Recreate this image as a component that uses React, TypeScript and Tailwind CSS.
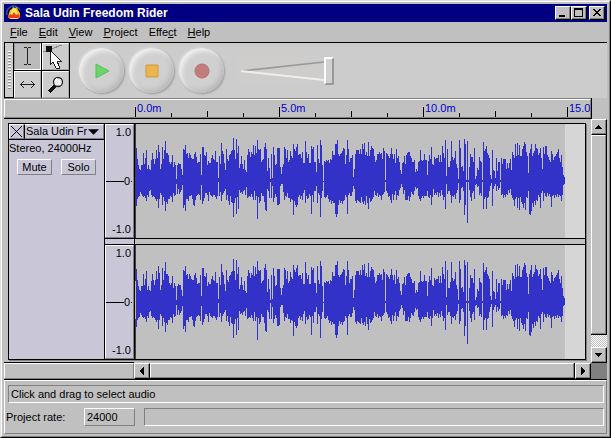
import React from 'react';
import clsx from 'clsx';

const MIDLINE = 260;

// upper and lower envelope, one value per column, around MIDLINE
const tops = [
  215, 160, 193, 211, 223, 226, 211, 211, 175, 208, 190, 166, 223, 211, 223, 226, 196, 175, 193, 208,
  193, 166, 190, 151, 172, 223, 208, 157, 193, 166, 139, 175, 175, 181, 202, 208, 202, 181, 217, 203,
  211, 253, 211, 205, 208, 208, 223, 243, 163, 166, 153, 178, 175, 190, 175, 181, 190, 193, 193, 178,
  172, 187, 205, 203, 203, 178, 243, 157, 157, 183, 185, 173, 213, 200, 205, 205, 190, 183, 195, 198,
  171, 203, 203, 252, 186, 208, 147, 171, 180, 205, 228, 165, 195, 200, 183, 180, 170, 167, 132, 167,
  193, 135, 177, 156, 222, 208, 186, 210, 225, 198, 228, 232, 183, 165, 174, 188, 174, 180, 153, 183,
  156, 177, 138, 165, 168, 165, 203, 198, 195, 159, 147, 165, 231, 192, 222, 255, 178, 250, 159, 183,
  213, 208, 162, 162, 162, 219, 240, 219, 208, 159, 165, 190, 168, 204, 198, 171, 186, 190, 150, 165,
  171, 158, 150, 183, 178, 178, 190, 174, 207, 207, 141, 174, 190, 180, 207, 205, 156, 165, 159, 204,
  204, 234, 153, 195, 205, 138, 153, 213, 260, 201, 203, 198, 201, 198, 205, 193, 198, 171, 183, 183,
  150, 148, 138, 178, 186, 180, 177, 171, 162, 165, 210, 183, 138, 165, 204, 192, 190, 183, 249, 225,
  180, 168, 168, 168, 180, 165, 180, 150, 165, 147, 183, 174, 186, 144, 186, 168, 156, 162, 165, 186,
  204, 198, 180, 180, 174, 180, 177, 195, 162, 171, 257, 177, 178, 186, 190, 180, 162, 180, 195, 178,
  205, 165, 192, 186, 202, 228, 240, 207, 204, 186, 210, 183, 177, 174, 174, 186, 192, 204, 204, 198,
  234, 225, 230, 204, 201, 168, 198, 201, 198, 180, 198, 198, 243, 201, 183, 195, 159, 210, 213, 189,
  193, 192, 192, 183, 204, 183, 204, 156, 177, 192, 138, 245, 165, 219, 219, 201, 141, 189, 198, 192,
  171, 210, 222, 255, 138, 162, 218, 216, 231, 135, 150, 258, 141, 258, 219, 180, 189, 189, 204, 162,
  255, 246, 222, 228, 189, 200, 202, 258, 144, 171, 165, 156, 177, 183, 192, 243, 255, 168, 228, 231,
  252, 192, 231, 204, 204, 258, 192, 210, 195, 195, 195, 225, 207, 222, 207, 195, 228, 174, 183, 192,
  150, 186, 147, 183, 153, 186, 186, 165, 156, 144, 150, 174, 186, 237, 177, 165, 150, 186, 177, 171,
  150, 162, 165, 183, 177, 162, 192, 225, 159, 180, 156, 156, 183, 189, 198, 204, 171, 180, 198, 189,
  186, 180, 174, 165, 192, 204, 183, 219, 243, 249,
];

const bottoms = [
  290, 334, 313, 308, 305, 293, 298, 305, 307, 305, 311, 319, 301, 307, 289, 286, 301, 307, 305, 308,
  313, 319, 313, 340, 313, 295, 301, 331, 307, 319, 349, 323, 328, 313, 313, 305, 307, 323, 295, 305,
  301, 268, 298, 283, 298, 293, 286, 271, 340, 331, 349, 313, 313, 319, 305, 305, 301, 313, 331, 334,
  318, 305, 301, 299, 301, 318, 273, 330, 321, 312, 297, 295, 303, 320, 292, 303, 306, 309, 303, 303,
  309, 315, 306, 264, 306, 294, 321, 303, 297, 291, 285, 318, 303, 321, 333, 306, 324, 327, 369, 327,
  310, 360, 309, 345, 288, 297, 294, 300, 291, 288, 303, 279, 312, 309, 306, 309, 300, 309, 318, 291,
  318, 306, 375, 309, 327, 321, 297, 306, 306, 324, 348, 350, 285, 291, 310, 262, 312, 276, 324, 310,
  300, 309, 333, 333, 330, 276, 268, 270, 294, 318, 306, 309, 297, 310, 312, 324, 315, 318, 363, 321,
  333, 339, 333, 309, 303, 315, 306, 318, 297, 288, 327, 306, 315, 312, 300, 306, 360, 303, 324, 291,
  291, 276, 327, 297, 303, 369, 312, 291, 264, 309, 312, 309, 303, 315, 324, 318, 330, 321, 327, 327,
  360, 369, 360, 333, 318, 327, 321, 330, 321, 318, 303, 309, 360, 303, 297, 306, 306, 294, 276, 285,
  321, 327, 318, 321, 324, 327, 309, 324, 330, 321, 333, 306, 327, 345, 312, 324, 321, 315, 309, 291,
  303, 306, 297, 309, 303, 306, 318, 303, 300, 294, 262, 291, 297, 309, 306, 318, 327, 300, 318, 303,
  291, 318, 303, 306, 288, 282, 270, 279, 300, 288, 318, 318, 318, 306, 321, 309, 294, 300, 303, 291,
  279, 285, 282, 306, 315, 321, 312, 306, 312, 306, 306, 306, 291, 309, 312, 303, 333, 309, 285, 303,
  297, 303, 294, 309, 297, 306, 288, 303, 318, 309, 345, 270, 300, 291, 291, 303, 327, 306, 309, 303,
  315, 297, 288, 265, 327, 318, 282, 279, 291, 362, 333, 262, 387, 262, 288, 309, 321, 297, 291, 315,
  273, 270, 279, 276, 303, 297, 306, 264, 345, 315, 309, 345, 312, 309, 291, 276, 265, 336, 285, 276,
  270, 291, 276, 288, 282, 262, 303, 300, 312, 303, 309, 300, 303, 288, 297, 285, 303, 312, 318, 336,
  315, 309, 342, 312, 348, 309, 324, 330, 342, 327, 348, 309, 312, 291, 360, 362, 351, 327, 339, 321,
  333, 318, 321, 303, 309, 342, 297, 291, 321, 297, 306, 309, 297, 306, 300, 309, 339, 306, 303, 312,
  303, 309, 300, 309, 303, 306, 321, 303, 273, 270,
];

const wavePath = tops
  .map((top, i) => `M${i} ${top}h1V${Math.max(bottoms[i], MIDLINE + 3)}h-1z`)
  .join('');

const menus = ['File', 'Edit', 'View', 'Project', 'Effect', 'Help'];
const accessKeys: Record<string, number> = { Effect: 4 };

const rulerTicks = ['0.0m', '', '', '', '5.0m', '', '', '', '10.0m', '', '', '', '15.0m'];

const raised = 'border border-t-white border-l-white border-r-[#808080] border-b-[#808080]';
const sunken = 'border border-t-[#808080] border-l-[#808080] border-r-white border-b-white';

function AppIcon() {
  return (
    <svg className="h-4 w-4 shrink-0" viewBox="0 0 16 16" aria-hidden="true">
      <circle cx="8" cy="8" r="7" fill="#00004c" />
      <path d="M1 10a7 7 0 0 1 13-5" fill="none" stroke="#2b55a8" strokeWidth="1.6" />
      <path d="M4 5l2-1 1-2 2 1 2-1 1 3 2 3v4l-2 2H4l-2-2 1-4z" fill="#ffae22" />
      <path d="M6 5l1-2 3 1 1 3 1 3H4l1-3z" fill="#ffee66" />
      <path d="M2 11l3-2 1 1 2-3 2 3 2-1 2 2-2 2H4z" fill="#f03a10" />
      <path d="M4 13h8l-1 1H5z" fill="#ffd0a0" />
    </svg>
  );
}

function CaptionButton({ label, children, className }: { label: string; children: React.ReactNode; className?: string }) {
  return (
    <button
      aria-label={label}
      className={clsx('h-[14px] w-4 border border-t-white border-l-white border-r-black border-b-black bg-[#c0c0c0] shadow-[inset_-1px_-1px_0_#808080]', className)}
    >
      <svg className="h-3 w-[14px]" viewBox="0 0 14 12" shapeRendering="crispEdges">
        {children}
      </svg>
    </button>
  );
}

function TitleBar() {
  return (
    <header className="flex h-[18px] items-center gap-[3px] bg-[#000080] px-[2px]">
      <AppIcon />
      <h1 className="flex-1 text-[12px] leading-[18px] font-bold text-white">Sala Udin Freedom Rider</h1>
      <div className="flex">
        <CaptionButton label="Minimize">
          <path d="M3 8h6v2H3z" />
        </CaptionButton>
        <CaptionButton label="Maximize">
          <path fillRule="evenodd" d="M2 1h9v9H2zM3 3v6h7V3z" />
        </CaptionButton>
        <CaptionButton label="Close" className="ml-[2px]">
          <path d="M3 2h2v1h1v1h2V3h1V2h2v1h-1v1H9v1H8v1h1v1h1v1h1v1H9V8H8V7H6v1H5v1H3V8h1V7h1V6h1V5H5V4H4V3H3z" />
        </CaptionButton>
      </div>
    </header>
  );
}

function MenuBar() {
  return (
    <nav className="flex h-[21px] items-center gap-[11px] border-b border-black pl-[6px]">
      {menus.map((menu) => {
        const key = accessKeys[menu] ?? 0;
        return (
          <button key={menu} className="leading-[13px]">
            {menu.slice(0, key)}
            <span className="underline underline-offset-1">{menu[key]}</span>
            {menu.slice(key + 1)}
          </button>
        );
      })}
    </nav>
  );
}

function ToolButton({ label, active, children }: { label: string; active?: boolean; children: React.ReactNode }) {
  return (
    <button
      aria-label={label}
      aria-pressed={!!active}
      className={clsx(
        'h-[27px] w-[27px]',
        active
          ? 'border border-t-[#999] border-l-[#999] border-r-white border-b-white bg-[#bbb]'
          : 'border border-t-white border-l-white border-r-[#aaa] border-b-[#aaa] bg-[#ccc]'
      )}
    >
      <svg className="h-[25px] w-[25px]" viewBox="0 0 25 25" shapeRendering="crispEdges">
        {children}
      </svg>
    </button>
  );
}

function ToolPalette() {
  return (
    <div className="grid grid-cols-2 gap-px border-x border-black bg-black">
      <ToolButton label="Selection tool" active>
        <path d="M9 3h3v1H9zM13 3h3v1h-3zM12 4h1v16h-1zM9 20h3v1H9zM13 20h3v1h-3z" fill="#222" />
      </ToolButton>
      <ToolButton label="Envelope tool">
        <path d="M0 8L19 1" stroke="#888" />
        <path d="M7 6v15l3-3 3 6h3v-2l-2-5h4z" fill="#fff" stroke="#222" />
        <path d="M3 2h6v6H3z" fill="#111" />
      </ToolButton>
      <ToolButton label="Time shift tool">
        <path d="M5 12h15v1H5zM6 11h1v3H6zM7 10h1v1H7zM8 9h1v1H8zM7 14h1v1H7zM8 15h1v1H8zM18 11h1v3h-1zM17 10h1v1h-1zM16 9h1v1h-1zM17 14h1v1h-1zM16 15h1v1h-1z" fill="#222" />
      </ToolButton>
      <ToolButton label="Zoom tool">
        <path d="M12 14l-6 6" stroke="#111" strokeWidth="3" />
        <circle cx="15" cy="10" r="4.5" fill="#eee" stroke="#222" strokeWidth="1.3" shapeRendering="auto" />
        <path d="M12 9l2-2" stroke="#fff" strokeWidth="1.5" />
      </ToolButton>
    </div>
  );
}

function TransportButton({ label, children }: { label: string; children: React.ReactNode }) {
  return (
    <button
      aria-label={label}
      className="flex h-[45px] w-[45px] items-center justify-center rounded-full bg-[#d0d0d0] shadow-[inset_3px_3px_4px_#efefef,inset_-3px_-3px_4px_#bbb,1px_1px_2px_#999,-1px_-1px_2px_#ddd]"
    >
      <svg className="h-4 w-4" viewBox="0 0 16 16">
        {children}
      </svg>
    </button>
  );
}

function Toolbar() {
  return (
    <div className="flex h-[55px] bg-[#ccc]">
      <div className="flex w-[9px] flex-col items-center justify-center gap-px border-b border-l border-black">
        {Array.from({ length: 13 }, (_, i) => (
          <div key={i} className="h-[2px] w-[3px] border-t border-white bg-[#909090]" />
        ))}
      </div>
      <ToolPalette />
      <div className="flex flex-1 items-center">
        <div className="ml-[9px] flex gap-[5px]">
          <TransportButton label="Play">
            <path d="M2 1L15 8L2 15z" fill="#6bd46b" stroke="#57c057" />
          </TransportButton>
          <TransportButton label="Stop">
            <path d="M2 2h12v12H2z" fill="#eab54e" stroke="#cf9a3c" />
          </TransportButton>
          <TransportButton label="Record">
            <circle cx="8" cy="8" r="7" fill="#c17c7c" stroke="#b87070" />
          </TransportButton>
        </div>
        <div className="relative ml-3 h-7 w-[98px] bg-[#cfcdcb]">
          <svg className="absolute inset-0 h-7 w-full" viewBox="0 0 98 28" aria-hidden="true">
            <path d="M5 14L88 5" stroke="#999" strokeWidth="1.6" />
            <path d="M5 14L88 23" stroke="#eee" strokeWidth="2" />
          </svg>
          <input
            type="range"
            aria-label="Output volume"
            min={0}
            max={100}
            defaultValue={100}
            className="relative block h-7 w-full appearance-none bg-transparent [&::-webkit-slider-thumb]:h-7 [&::-webkit-slider-thumb]:w-[10px] [&::-webkit-slider-thumb]:appearance-none [&::-webkit-slider-thumb]:rounded-[2px] [&::-webkit-slider-thumb]:border-2 [&::-webkit-slider-thumb]:border-t-white [&::-webkit-slider-thumb]:border-r-[#999] [&::-webkit-slider-thumb]:border-b-[#999] [&::-webkit-slider-thumb]:border-l-white [&::-webkit-slider-thumb]:bg-[#d0d0d0]"
          />
        </div>
      </div>
    </div>
  );
}

function TimeRuler() {
  return (
    <div className="mr-[15px] border-r border-b border-black">
      <div className="border-t border-[#808080]">
        <div className={clsx('flex h-[19px] items-end overflow-hidden pl-[130px]', raised)}>
          {rulerTicks.map((label, i) => (
            <div key={i} className="flex w-9 shrink-0 items-end gap-px">
              <div className={clsx('w-px shrink-0 bg-black', label ? 'h-[10px]' : i % 2 ? 'h-1' : 'h-[6px]')} />
              {label && <span className="pb-[2px] leading-[13px] whitespace-nowrap text-[#0000cc]">{label}</span>}
            </div>
          ))}
        </div>
      </div>
    </div>
  );
}

function TrackPanel() {
  return (
    <aside className="w-24 shrink-0 border-r border-black bg-[#c9c7d7]">
      <div className="flex h-4 border-b border-black">
        <button aria-label="Close track" className={clsx('flex w-[15px] items-center justify-center', raised)}>
          <svg className="h-[11px] w-[11px]" viewBox="0 0 11 11">
            <path d="M0 0l11 11M11 0L0 11" stroke="#000" />
          </svg>
        </button>
        <button className="flex flex-1 items-center justify-between border border-t-white border-r-[#808080] border-b-[#808080] border-l-black pr-1 pl-px">
          <span className="leading-[13px] whitespace-nowrap">Sala Udin Fr</span>
          <svg className="h-[6px] w-[11px]" viewBox="0 0 12 6">
            <path d="M0 0h12L6 6z" />
          </svg>
        </button>
      </div>
      <p className="pt-[2px] leading-[13px]">Stereo, 24000Hz</p>
      <div className="flex gap-[9px] pt-1 pl-2">
        {['Mute', 'Solo'].map((label) => (
          <button key={label} className={clsx('h-4 w-[35px] leading-[14px]', raised)}>
            {label}
          </button>
        ))}
      </div>
    </aside>
  );
}

function Channel({ cursor }: { cursor?: boolean }) {
  return (
    <div className="flex h-[114px]">
      <div className={clsx('flex w-[29px] shrink-0 flex-col justify-between bg-[#c9c7d7] text-right leading-[13px]', raised)}>
        <span className="pt-px pr-[2px]">1.0</span>
        <span className="flex items-center">
          <span className="h-px flex-1 bg-black" />
          0
          <span className="mr-px ml-px h-px w-px bg-black" />
        </span>
        <span className="pr-[2px] pb-px">-1.0</span>
      </div>
      <div className="flex flex-1 border-l border-black bg-[#d6d6d6]">
        <svg className="h-[114px] w-[430px] bg-[#c0c0c0]" viewBox="0 89 430 342" preserveAspectRatio="none" shapeRendering="crispEdges">
          <path d={wavePath} fill="#3232c8" />
          <path d="M0 89h1v342H0z" fill="#404040" />
          {cursor && <path d="M0 197h1v114H0z" fill="#c8c832" />}
        </svg>
      </div>
    </div>
  );
}

function ScrollButton({ label, arrow }: { label: string; arrow: string }) {
  return (
    <button
      aria-label={label}
      className="flex h-4 w-4 shrink-0 items-center justify-center border border-t-white border-l-white border-r-black border-b-black shadow-[inset_-1px_-1px_0_#808080]"
    >
      <svg className="h-2 w-2" viewBox="0 0 8 8" shapeRendering="crispEdges">
        <path d={arrow} />
      </svg>
    </button>
  );
}

const thumb = 'border-r border-b border-black';

export default function App() {
  return (
    <div className="border border-t-[#dfdfdf] border-r-black border-b-black border-l-[#dfdfdf] bg-[#c0c0c0] font-['Liberation_Sans',Arial,sans-serif] text-[11px] text-black">
      <div className={clsx('p-[2px]', raised)}>
        <TitleBar />
        <MenuBar />
        <Toolbar />
        <TimeRuler />

        <main className="flex">
          <div className="min-w-0 flex-1 pt-1 pr-[5px] pb-[3px] pl-1">
            <section className="flex border border-black shadow-[1px_1px_0_#808080]">
              <TrackPanel />
              <div className="min-w-0 flex-1">
                <Channel />
                <div className="flex h-[7px] border-y border-black">
                  <div className="w-[29px] bg-[#c9c7d7]" />
                  <div className="flex-1 border-l border-black" />
                </div>
                <Channel cursor />
              </div>
            </section>
          </div>
          <div className="flex w-4 shrink-0 flex-col">
            <ScrollButton label="Scroll up" arrow="M3 2h1v1h1v1h1v1h1v1H0V5h1V4h1V3h1z" />
            <div className={clsx('flex-1', thumb)}>
              <div className={clsx('h-full', raised)} />
            </div>
            <div className="h-3 bg-[repeating-conic-gradient(#fff_0_25%,#c0c0c0_0_50%)] bg-[size:2px_2px]" />
            <ScrollButton label="Scroll down" arrow="M0 2h7v1H6v1H5v1H4v1H3V5H2V4H1V3H0z" />
          </div>
        </main>

        <div className="flex h-[17px] border-b border-black">
          <div className={clsx('w-[130px] shrink-0 shadow-[0_-1px_0_#000]', raised)} />
          <ScrollButton label="Scroll left" arrow="M5 0h1v8H5V7H4V6H3V5H2V3h1V2h1V1h1z" />
          <div className={clsx('flex-1', thumb)}>
            <div className={clsx('h-full', raised)} />
          </div>
          <ScrollButton label="Scroll right" arrow="M2 0h1v1h1v1h1v1h1v2H5v1H4v1H3v1H2z" />
          <div className="w-4 shrink-0 bg-[#808080]" />
        </div>

        <footer className={clsx('flex flex-col gap-[5px] pt-1 pr-[2px] pb-[7px]', raised)}>
          <p className={clsx('ml-[3px] h-[18px] pl-[2px] leading-4', sunken)}>Click and drag to select audio</p>
          <div className="flex h-[18px] items-stretch pl-px">
            <label htmlFor="project-rate" className="w-[78px] leading-[18px]">
              Project rate:
            </label>
            <input
              id="project-rate"
              defaultValue="24000"
              className={clsx('w-[51px] bg-transparent pl-[2px] leading-4', raised)}
            />
            <div className={clsx('ml-[9px] flex-1', sunken)} />
          </div>
        </footer>
      </div>
    </div>
  );
}
